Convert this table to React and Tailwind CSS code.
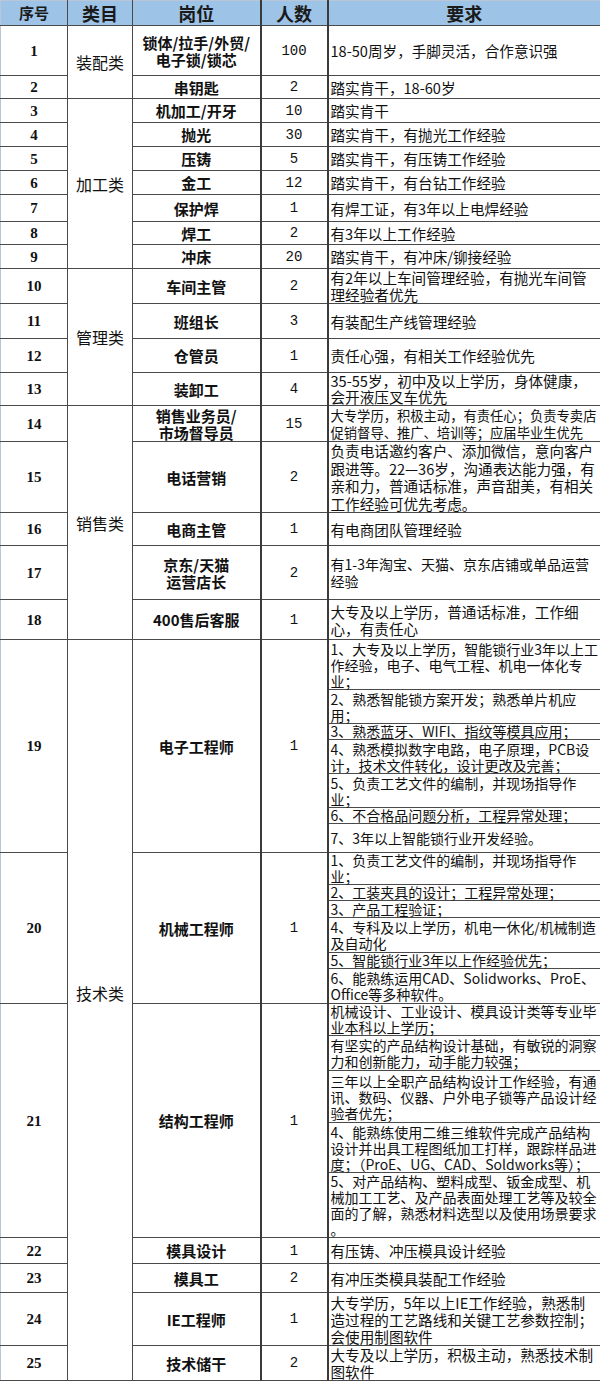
import React from 'react';

// 11pt ≈ 14.6px, 10.5pt = 14px, 10pt ≈ 13.3px
const jobs = [
  { no: '1', cat: '装配类', catSpan: 2, pos: ['锁体/拉手/外贸/', '电子锁/锁芯'], n: '100', subs: [{ h: 'h-[50px]', lines: ['18-50周岁，手脚灵活，合作意识强'] }] },
  { no: '2', pos: ['串钥匙'], n: '2', subs: [{ h: 'h-[23px]', lines: ['踏实肯干，18-60岁'] }] },
  { no: '3', cat: '加工类', catSpan: 7, pos: ['机加工/开牙'], n: '10', subs: [{ h: 'h-[24px]', lines: ['踏实肯干'] }] },
  { no: '4', pos: ['抛光'], n: '30', subs: [{ h: 'h-[24px]', lines: ['踏实肯干，有抛光工作经验'] }] },
  { no: '5', pos: ['压铸'], n: '5', subs: [{ h: 'h-[24px]', lines: ['踏实肯干，有压铸工作经验'] }] },
  { no: '6', pos: ['金工'], n: '12', subs: [{ h: 'h-[24px]', lines: ['踏实肯干，有台钻工作经验'] }] },
  { no: '7', pos: ['保护焊'], n: '1', subs: [{ h: 'h-[27px]', lines: ['有焊工证，有3年以上电焊经验'] }] },
  { no: '8', pos: ['焊工'], n: '2', subs: [{ h: 'h-[23px]', lines: ['有3年以上工作经验'] }] },
  { no: '9', pos: ['冲床'], n: '20', subs: [{ h: 'h-[24px]', lines: ['踏实肯干，有冲床/铆接经验'] }] },
  { no: '10', cat: '管理类', catSpan: 4, pos: ['车间主管'], n: '2', subs: [{ h: 'h-[35px]', lines: ['有2年以上车间管理经验，有抛光车间管', '理经验者优先'] }] },
  { no: '11', pos: ['班组长'], n: '3', subs: [{ h: 'h-[35px]', lines: ['有装配生产线管理经验'] }] },
  { no: '12', pos: ['仓管员'], n: '1', subs: [{ h: 'h-[34px]', lines: ['责任心强，有相关工作经验优先'] }] },
  { no: '13', pos: ['装卸工'], n: '4', subs: [{ h: 'h-[33px]', lh: 'leading-[16px]', lines: ['35-55岁，初中及以上学历，身体健康，', '会开液压叉车优先'] }] },
  {
    no: '14', cat: '销售类', catSpan: 5, pos: ['销售业务员/', '市场督导员'], n: '15', size: 'text-[13.3px]',
    subs: [{ h: 'h-[36px]', lines: ['大专学历，积极主动，有责任心；负责专卖店', '促销督导、推广、培训等；应届毕业生优先'] }],
  },
  { no: '15', pos: ['电话营销'], n: '2', subs: [{ h: 'h-[71px]', lh: 'leading-[17.5px]', lines: ['负责电话邀约客户、添加微信，意向客户', '跟进等。22—36岁，沟通表达能力强，有', '亲和力，普通话标准，声音甜美，有相关', '工作经验可优先考虑。'] }] },
  { no: '16', pos: ['电商主管'], n: '1', subs: [{ h: 'h-[33px]', lines: ['有电商团队管理经验'] }] },
  { no: '17', pos: ['京东/天猫', '运营店长'], n: '2', size: 'text-[14px]', subs: [{ h: 'h-[54px]', lines: ['有1-3年淘宝、天猫、京东店铺或单品运营', '经验'] }] },
  { no: '18', pos: ['400售后客服'], n: '1', subs: [{ h: 'h-[40px]', lines: ['大专及以上学历，普通话标准，工作细', '心，有责任心'] }] },
  {
    no: '19', cat: '技术类', catSpan: 22, pos: ['电子工程师'], n: '1', size: 'text-[14px]', subs: [
      { h: 'h-[50px]', lh: 'leading-[16px]', lines: ['1、大专及以上学历，智能锁行业3年以上工', '作经验，电子、电气工程、机电一体化专', '业；'] },
      { h: 'h-[34px]', lh: 'leading-[16px]', lines: ['2、熟悉智能锁方案开发；熟悉单片机应', '用；'] },
      { h: 'h-[16px]', lh: 'leading-[15px]', lines: ['3、熟悉蓝牙、WIFI、指纹等模具应用；'] },
      { h: 'h-[34px]', lh: 'leading-[16px]', lines: ['4、熟悉模拟数字电路，电子原理，PCB设', '计，技术文件转化，设计更改及完善；'] },
      { h: 'h-[34px]', lh: 'leading-[16px]', lines: ['5、负责工艺文件的编制，并现场指导作', '业；'] },
      { h: 'h-[16px]', lh: 'leading-[15px]', lines: ['6、不合格品问题分析，工程异常处理；'] },
      { h: 'h-[29px]', lh: 'leading-[16px]', lines: ['7、3年以上智能锁行业开发经验。'] },
    ],
  },
  {
    no: '20', pos: ['机械工程师'], n: '1', size: 'text-[14px]', subs: [
      { h: 'h-[32px]', lh: 'leading-[15.5px]', lines: ['1、负责工艺文件的编制，并现场指导作', '业；'] },
      { h: 'h-[16px]', lh: 'leading-[15px]', lines: ['2、工装夹具的设计；工程异常处理；'] },
      { h: 'h-[17px]', lh: 'leading-[16px]', lines: ['3、产品工程验证；'] },
      { h: 'h-[35px]', lh: 'leading-[16px]', lines: ['4、专科及以上学历，机电一休化/机械制造', '及自动化'] },
      { h: 'h-[16px]', lh: 'leading-[15px]', lines: ['5、智能锁行业3年以上作经验优先；'] },
      { h: 'h-[35px]', lh: 'leading-[16px]', lines: ['6、能熟练运用CAD、Solidworks、ProE、', 'Office等多种软件。'] },
    ],
  },
  {
    no: '21', pos: ['结构工程师'], n: '1', size: 'text-[14px]', subs: [
      { h: 'h-[32px]', lh: 'leading-[15.5px]', lines: ['机械设计、工业设计、模具设计类等专业毕', '业本科以上学历；'] },
      { h: 'h-[35px]', lh: 'leading-[16px]', lines: ['有坚实的产品结构设计基础，有敏锐的洞察', '力和创新能力，动手能力较强；'] },
      { h: 'h-[52px]', lh: 'leading-[16px]', lines: ['三年以上全职产品结构设计工作经验，有通', '讯、数码、仪器、户外电子锁等产品设计经', '验者优先；'] },
      { h: 'h-[50px]', lh: 'leading-[16px]', lines: ['4、能熟练使用二维三维软件完成产品结构', '设计并出具工程图纸加工打样，跟踪样品进', '度；（ProE、UG、CAD、Soldworks等）；'] },
      { h: 'h-[65px]', lh: 'leading-[16px]', lines: ['5、对产品结构、塑料成型、钣金成型、机', '械加工工艺、及产品表面处理工艺等及较全', '面的了解，熟悉材料选型以及使用场景要求', '。'] },
    ],
  },
  { no: '22', pos: ['模具设计'], n: '1', subs: [{ h: 'h-[26px]', lines: ['有压铸、冲压模具设计经验'] }] },
  { no: '23', pos: ['模具工'], n: '2', subs: [{ h: 'h-[29px]', lines: ['有冲压类模具装配工作经验'] }] },
  { no: '24', pos: ['IE工程师'], n: '1', subs: [{ h: 'h-[53px]', lines: ['大专学历，5年以上IE工作经验，熟悉制', '造过程的工艺路线和关键工艺参数控制；', '会使用制图软件'] }] },
  { no: '25', pos: ['技术储干'], n: '2', subs: [{ h: 'h-[35px]', lines: ['大专及以上学历，积极主动，熟悉技术制', '图软件'] }] },
];

const cell = 'border border-[#4a4a4a] p-0 align-middle';

const Lines = ({ lines }) =>
  lines.map((l, i) => (
    <div key={i} className="whitespace-nowrap">
      {l}
    </div>
  ));

export default function App() {
  const rows = [];
  jobs.forEach((job) => {
    job.subs.forEach((sub, j) => {
      rows.push(
        <tr key={`${job.no}-${j}`} className={sub.h}>
          {j === 0 && (
            <td
              rowSpan={job.subs.length}
              className={`${cell} border-l-[#b9c6d8] text-center font-['Liberation_Serif',serif] text-[15px] leading-[16px] font-bold`}
            >
              {job.no}
            </td>
          )}
          {j === 0 && job.cat && (
            <td rowSpan={job.catSpan} className={`${cell} text-center text-[16px] leading-[18px] ${job.cat === '技术类' ? 'pb-[34px]' : ''}`}>
              {job.cat}
            </td>
          )}
          {j === 0 && (
            <td rowSpan={job.subs.length} className={`${cell} border-r-2 border-r-[#3a3a3a] text-center text-[15px] leading-[17px] font-bold`}>
              <Lines lines={job.pos} />
            </td>
          )}
          {j === 0 && (
            <td
              rowSpan={job.subs.length}
              className={`${cell} border-r-2 border-r-[#3a3a3a] text-center font-['Liberation_Mono',monospace] text-[14px] leading-[16px]`}
            >
              {job.n}
            </td>
          )}
          <td className={`${cell} border-r-[#c5cfdc] pl-[2px] ${job.size || 'text-[14.6px]'} ${sub.lh || 'leading-[17px]'}`}>
            <Lines lines={sub.lines} />
          </td>
        </tr>
      );
    });
  });

  return (
    <div className="w-[600px] bg-white font-['Noto_Sans_CJK_SC',sans-serif] text-[#111]">
      <table className="w-[600px] table-fixed border-collapse">
        <colgroup>
          <col className="w-[67px]" />
          <col className="w-[65px]" />
          <col className="w-[128px]" />
          <col className="w-[67px]" />
          <col className="w-[273px]" />
        </colgroup>
        <thead>
          <tr className="h-[25px] bg-[#9dc3e6] font-bold text-[#1a1a1a]">
            <th className={`${cell} border-t-[#b9c6d8] border-l-[#b9c6d8] text-[15px] leading-[20px]`}>序号</th>
            <th className={`${cell} border-t-[#b9c6d8] text-[18px] leading-[22px]`}>类目</th>
            <th className={`${cell} border-t-[#b9c6d8] border-r-2 border-r-[#3a3a3a] text-[18px] leading-[22px]`}>岗位</th>
            <th className={`${cell} border-t-[#b9c6d8] border-r-2 border-r-[#3a3a3a] text-[18px] leading-[22px]`}>人数</th>
            <th className={`${cell} border-t-[#b9c6d8] border-r-[#c5cfdc] text-[18px] leading-[22px]`}>要求</th>
          </tr>
        </thead>
        <tbody>{rows}</tbody>
      </table>
    </div>
  );
}
